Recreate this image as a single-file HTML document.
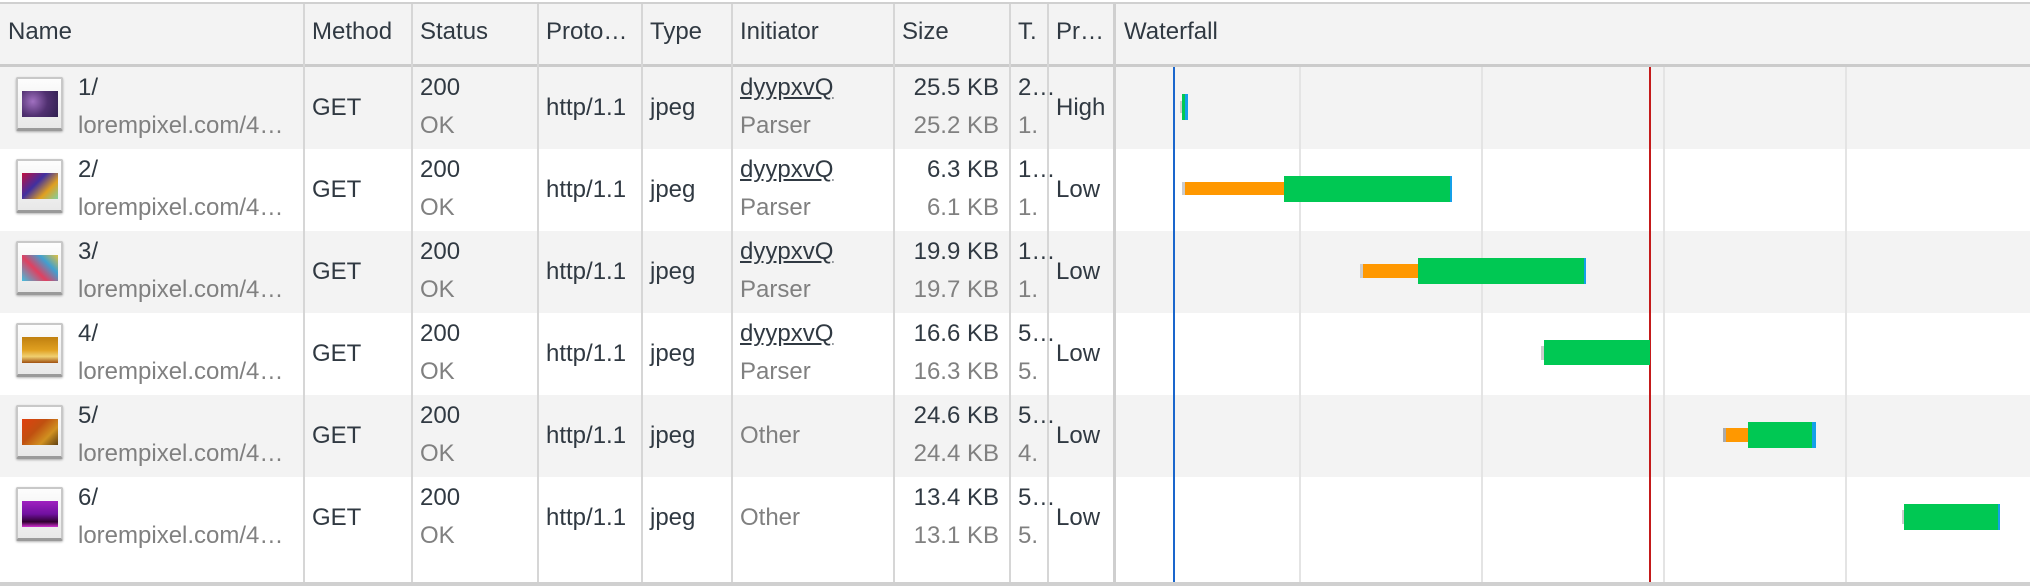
<!DOCTYPE html>
<html><head><meta charset="utf-8"><style>
*{margin:0;padding:0;box-sizing:border-box}
body{width:2030px;height:586px;overflow:hidden;background:#fff;font-family:"Liberation Sans",Arial,sans-serif;font-size:24px;color:#303942;position:relative}
.a{position:absolute;white-space:nowrap}
.g{color:#808080}
.vl{position:absolute;width:2px;background:#d6d6d6}
.row{position:absolute;left:0;width:2030px;height:82px}
.ic{position:absolute;left:16px;width:47px;height:54px;background:linear-gradient(#fdfdfd,#e8e8e8);border:2px solid #c8c8c8;border-bottom:3px solid #9a9a9a;border-radius:2px;box-shadow:0 1px 2px rgba(0,0,0,.3)}
.ic i{position:absolute;left:4px;top:12px;width:36px;height:26px}
.b{position:absolute}
</style></head><body>
<div class="a" style="left:0;top:0;width:2030px;height:4px;border-bottom:2px solid #d0d0d0"></div>
<div class="a" style="left:0;top:4px;width:2030px;height:60px;background:#f3f3f3"></div>
<div class="a" style="left:0;top:64px;width:2030px;height:3px;background:#cbcbcb"></div>
<div class="row" style="top:67px;background:#f3f3f3"></div>
<div class="row" style="top:149px"></div>
<div class="row" style="top:231px;background:#f3f3f3"></div>
<div class="row" style="top:313px"></div>
<div class="row" style="top:395px;background:#f3f3f3"></div>
<div class="row" style="top:477px"></div>
<div class="a" style="left:0;top:582px;width:2030px;height:4px;background:#d0d0d0"></div>
<div class="vl" style="left:303px;top:4px;height:578px"></div>
<div class="vl" style="left:411px;top:4px;height:578px"></div>
<div class="vl" style="left:537px;top:4px;height:578px"></div>
<div class="vl" style="left:641px;top:4px;height:578px"></div>
<div class="vl" style="left:731px;top:4px;height:578px"></div>
<div class="vl" style="left:893px;top:4px;height:578px"></div>
<div class="vl" style="left:1009px;top:4px;height:578px"></div>
<div class="vl" style="left:1047px;top:4px;height:578px"></div>
<div class="vl" style="left:1113px;top:4px;height:578px;width:3px;background:#cfcfcf"></div>
<div class="vl" style="left:1299px;top:67px;height:515px;background:#e4e4e4"></div>
<div class="vl" style="left:1481px;top:67px;height:515px;background:#e4e4e4"></div>
<div class="vl" style="left:1663px;top:67px;height:515px;background:#e4e4e4"></div>
<div class="vl" style="left:1845px;top:67px;height:515px;background:#e4e4e4"></div>
<div class="a" style="left:1173px;top:67px;width:2px;height:515px;background:#1a66cc"></div>
<div class="a" style="left:1649px;top:67px;width:2px;height:515px;background:#c41a1a"></div>
<div class="a" style="left:8px;top:18px">Name</div>
<div class="a" style="left:312px;top:18px">Method</div>
<div class="a" style="left:420px;top:18px">Status</div>
<div class="a" style="left:546px;top:18px">Proto…</div>
<div class="a" style="left:650px;top:18px">Type</div>
<div class="a" style="left:740px;top:18px">Initiator</div>
<div class="a" style="left:902px;top:18px">Size</div>
<div class="a" style="left:1018px;top:18px">T.</div>
<div class="a" style="left:1056px;top:18px">Pr…</div>
<div class="a" style="left:1124px;top:18px">Waterfall</div>

<!-- Row 1 -->
<div class="ic" style="top:77px"><i style="background:radial-gradient(circle at 30% 40%,#a070c0,#503070 50%,#302050)"></i></div>
<div class="a" style="left:78px;top:74px">1/</div><div class="a g" style="left:78px;top:112px">lorempixel.com/4…</div>
<div class="a" style="left:312px;top:94px">GET</div>
<div class="a" style="left:420px;top:74px">200</div><div class="a g" style="left:420px;top:112px">OK</div>
<div class="a" style="left:546px;top:94px">http/1.1</div>
<div class="a" style="left:650px;top:94px">jpeg</div>
<div class="a" style="left:740px;top:74px;text-decoration:underline">dyypxvQ</div><div class="a g" style="left:740px;top:112px">Parser</div>
<div class="a" style="right:1031px;top:74px">25.5 KB</div><div class="a g" style="right:1031px;top:112px">25.2 KB</div>
<div class="a" style="left:1018px;top:74px">2…</div><div class="a g" style="left:1018px;top:112px">1.</div>
<div class="a" style="left:1056px;top:94px">High</div>
<!-- Row 2 -->
<div class="ic" style="top:159px"><i style="background:linear-gradient(135deg,#c01040,#4030a0 40%,#e0a020 70%,#80d0a0)"></i></div>
<div class="a" style="left:78px;top:156px">2/</div><div class="a g" style="left:78px;top:194px">lorempixel.com/4…</div>
<div class="a" style="left:312px;top:176px">GET</div>
<div class="a" style="left:420px;top:156px">200</div><div class="a g" style="left:420px;top:194px">OK</div>
<div class="a" style="left:546px;top:176px">http/1.1</div>
<div class="a" style="left:650px;top:176px">jpeg</div>
<div class="a" style="left:740px;top:156px;text-decoration:underline">dyypxvQ</div><div class="a g" style="left:740px;top:194px">Parser</div>
<div class="a" style="right:1031px;top:156px">6.3 KB</div><div class="a g" style="right:1031px;top:194px">6.1 KB</div>
<div class="a" style="left:1018px;top:156px">1…</div><div class="a g" style="left:1018px;top:194px">1.</div>
<div class="a" style="left:1056px;top:176px">Low</div>
<!-- Row 3 -->
<div class="ic" style="top:241px"><i style="background:linear-gradient(45deg,#40c0e0,#e04060 40%,#40a0d0 70%,#e0c040)"></i></div>
<div class="a" style="left:78px;top:238px">3/</div><div class="a g" style="left:78px;top:276px">lorempixel.com/4…</div>
<div class="a" style="left:312px;top:258px">GET</div>
<div class="a" style="left:420px;top:238px">200</div><div class="a g" style="left:420px;top:276px">OK</div>
<div class="a" style="left:546px;top:258px">http/1.1</div>
<div class="a" style="left:650px;top:258px">jpeg</div>
<div class="a" style="left:740px;top:238px;text-decoration:underline">dyypxvQ</div><div class="a g" style="left:740px;top:276px">Parser</div>
<div class="a" style="right:1031px;top:238px">19.9 KB</div><div class="a g" style="right:1031px;top:276px">19.7 KB</div>
<div class="a" style="left:1018px;top:238px">1…</div><div class="a g" style="left:1018px;top:276px">1.</div>
<div class="a" style="left:1056px;top:258px">Low</div>
<!-- Row 4 -->
<div class="ic" style="top:323px"><i style="background:linear-gradient(#c08010,#e0a020 50%,#f0d070 75%,#a05010)"></i></div>
<div class="a" style="left:78px;top:320px">4/</div><div class="a g" style="left:78px;top:358px">lorempixel.com/4…</div>
<div class="a" style="left:312px;top:340px">GET</div>
<div class="a" style="left:420px;top:320px">200</div><div class="a g" style="left:420px;top:358px">OK</div>
<div class="a" style="left:546px;top:340px">http/1.1</div>
<div class="a" style="left:650px;top:340px">jpeg</div>
<div class="a" style="left:740px;top:320px;text-decoration:underline">dyypxvQ</div><div class="a g" style="left:740px;top:358px">Parser</div>
<div class="a" style="right:1031px;top:320px">16.6 KB</div><div class="a g" style="right:1031px;top:358px">16.3 KB</div>
<div class="a" style="left:1018px;top:320px">5…</div><div class="a g" style="left:1018px;top:358px">5.</div>
<div class="a" style="left:1056px;top:340px">Low</div>
<!-- Row 5 -->
<div class="ic" style="top:405px"><i style="background:linear-gradient(135deg,#e04010,#c05010 40%,#d09020 70%,#604010)"></i></div>
<div class="a" style="left:78px;top:402px">5/</div><div class="a g" style="left:78px;top:440px">lorempixel.com/4…</div>
<div class="a" style="left:312px;top:422px">GET</div>
<div class="a" style="left:420px;top:402px">200</div><div class="a g" style="left:420px;top:440px">OK</div>
<div class="a" style="left:546px;top:422px">http/1.1</div>
<div class="a" style="left:650px;top:422px">jpeg</div>
<div class="a g" style="left:740px;top:422px">Other</div>
<div class="a" style="right:1031px;top:402px">24.6 KB</div><div class="a g" style="right:1031px;top:440px">24.4 KB</div>
<div class="a" style="left:1018px;top:402px">5…</div><div class="a g" style="left:1018px;top:440px">4.</div>
<div class="a" style="left:1056px;top:422px">Low</div>
<!-- Row 6 -->
<div class="ic" style="top:487px"><i style="background:linear-gradient(#a020c0,#7010a0 50%,#300030 80%,#d030d0)"></i></div>
<div class="a" style="left:78px;top:484px">6/</div><div class="a g" style="left:78px;top:522px">lorempixel.com/4…</div>
<div class="a" style="left:312px;top:504px">GET</div>
<div class="a" style="left:420px;top:484px">200</div><div class="a g" style="left:420px;top:522px">OK</div>
<div class="a" style="left:546px;top:504px">http/1.1</div>
<div class="a" style="left:650px;top:504px">jpeg</div>
<div class="a g" style="left:740px;top:504px">Other</div>
<div class="a" style="right:1031px;top:484px">13.4 KB</div><div class="a g" style="right:1031px;top:522px">13.1 KB</div>
<div class="a" style="left:1018px;top:484px">5…</div><div class="a g" style="left:1018px;top:522px">5.</div>
<div class="a" style="left:1056px;top:504px">Low</div>

<div class="b" style="left:1180px;top:101px;width:2px;height:12px;background:#ccc"></div>
<div class="b" style="left:1182px;top:94px;width:3px;height:26px;background:#00c853"></div>
<div class="b" style="left:1185px;top:94px;width:3px;height:26px;background:#14a0e8"></div>

<div class="b" style="left:1182px;top:182px;width:3px;height:13px;background:#ccc"></div>
<div class="b" style="left:1185px;top:182px;width:99px;height:13px;background:#ff9800"></div>
<div class="b" style="left:1284px;top:176px;width:166px;height:26px;background:#00c853"></div>
<div class="b" style="left:1450px;top:176px;width:2px;height:26px;background:#14a0e8"></div>

<div class="b" style="left:1360px;top:264px;width:3px;height:14px;background:#ccc"></div>
<div class="b" style="left:1363px;top:264px;width:55px;height:14px;background:#ff9800"></div>
<div class="b" style="left:1418px;top:258px;width:166px;height:26px;background:#00c853"></div>
<div class="b" style="left:1584px;top:258px;width:2px;height:26px;background:#14a0e8"></div>

<div class="b" style="left:1541px;top:346px;width:3px;height:14px;background:#ccc"></div>
<div class="b" style="left:1544px;top:340px;width:106px;height:25px;background:#00c853"></div>

<div class="b" style="left:1723px;top:428px;width:3px;height:14px;background:#aaa"></div>
<div class="b" style="left:1726px;top:428px;width:22px;height:14px;background:#ff9800"></div>
<div class="b" style="left:1748px;top:422px;width:64px;height:26px;background:#00c853"></div>
<div class="b" style="left:1812px;top:422px;width:4px;height:26px;background:#14a0e8"></div>

<div class="b" style="left:1902px;top:510px;width:2px;height:14px;background:#ccc"></div>
<div class="b" style="left:1904px;top:504px;width:94px;height:26px;background:#00c853"></div>
<div class="b" style="left:1998px;top:504px;width:2px;height:26px;background:#14a0e8"></div>
</body></html>
